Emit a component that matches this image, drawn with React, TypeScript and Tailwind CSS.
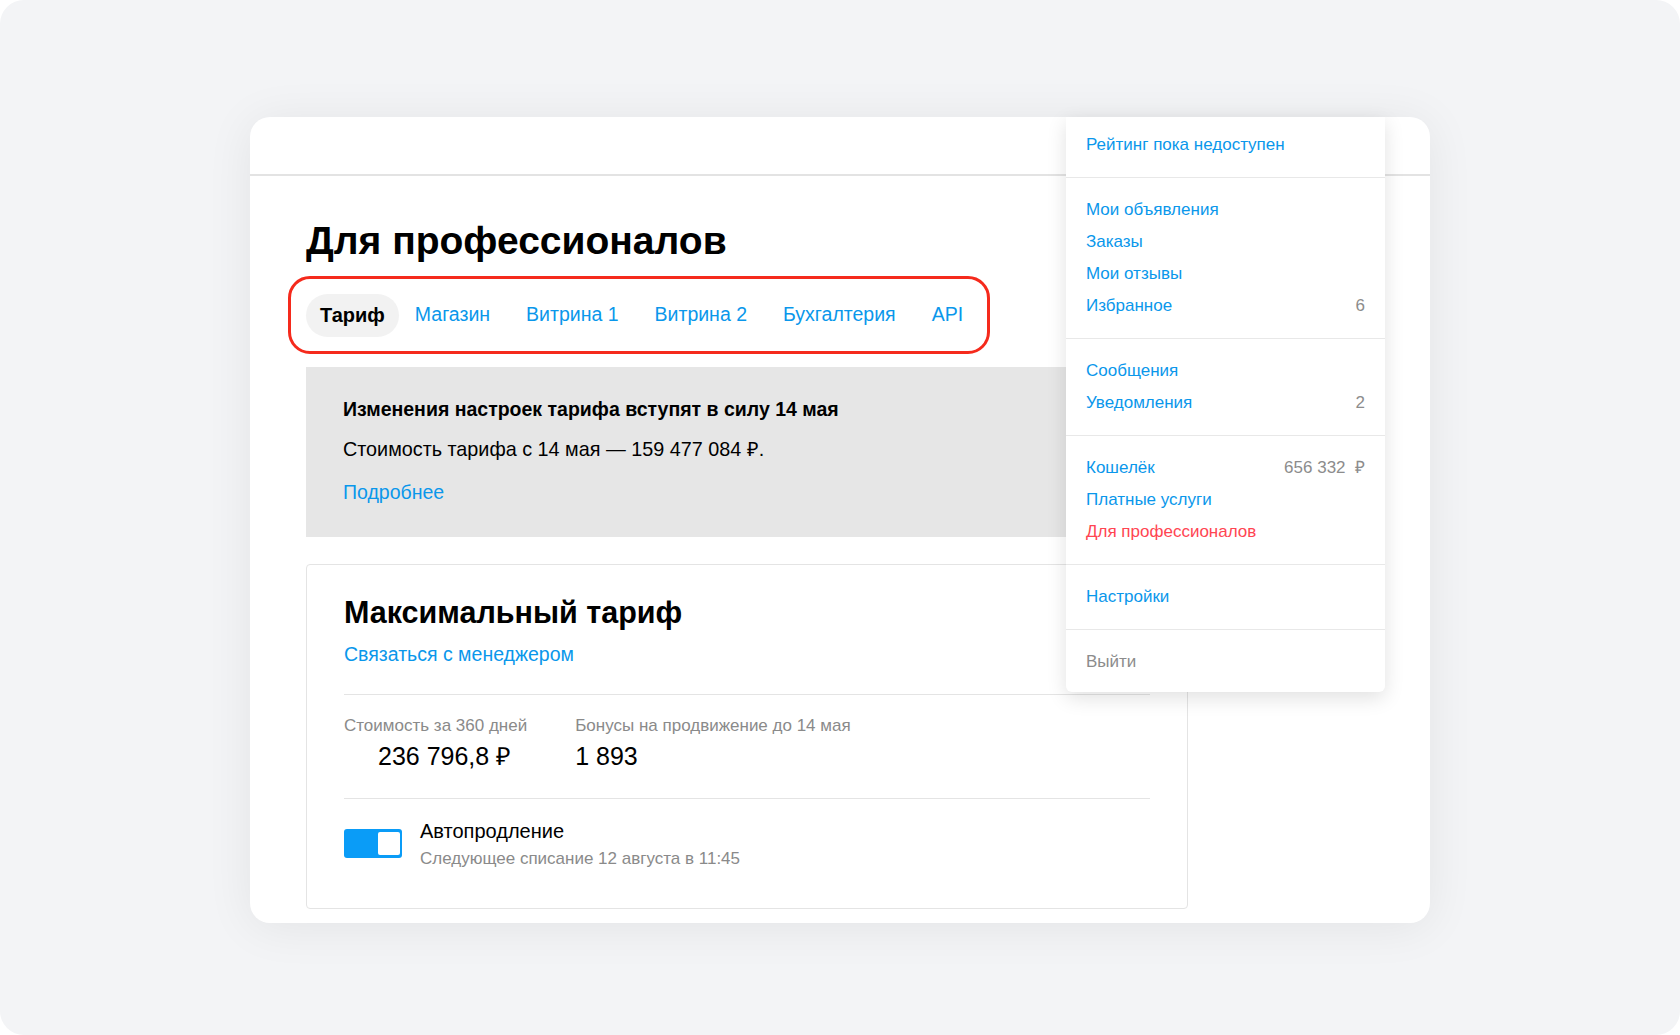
import React from 'react';

const tabs = ['Тариф', 'Магазин', 'Витрина 1', 'Витрина 2', 'Бухгалтерия', 'API'];

type MenuItem = { label: string; value?: string; tone?: 'link' | 'active' | 'muted' };

const menu: MenuItem[][] = [
  [{ label: 'Рейтинг пока недоступен' }],
  [
    { label: 'Мои объявления' },
    { label: 'Заказы' },
    { label: 'Мои отзывы' },
    { label: 'Избранное', value: '6' },
  ],
  [
    { label: 'Сообщения' },
    { label: 'Уведомления', value: '2' },
  ],
  [
    { label: 'Кошелёк', value: '656 332\u00a0\u00a0₽' },
    { label: 'Платные услуги' },
    { label: 'Для профессионалов', tone: 'active' },
  ],
  [{ label: 'Настройки' }],
  [{ label: 'Выйти', tone: 'muted' }],
];

const App: React.FC = () => {
  return (
    <div className="bg-white min-h-screen" style={{ fontFamily: '"Liberation Sans", Arial, sans-serif' }}>
      <div className="h-[1035px] rounded-3xl bg-[#f3f4f6] flex justify-center pt-[117px]">
        {/* Main card */}
        <div className="relative w-[1180px] h-[806px] rounded-[20px] bg-white shadow-[0_4px_48px_rgba(0,0,0,0.07)]">
          <div className="h-[59px] border-b-2 border-[#e3e3e3]" />

          <div className="pl-[56px]">
            <h1 className="mt-[45px] text-[39px] leading-[40px] font-bold text-black">Для профессионалов</h1>

            {/* Tabs (highlighted) */}
            <div className="mt-[15px] -ml-[18px] w-[702px] h-[78px] border-[3px] border-[#f52a1c] rounded-[22px] flex items-center pl-[15px]">
              {tabs.map((t, i) =>
                i === 0 ? (
                  <span key={t} className="h-[43px] px-[14px] rounded-full bg-[#f2f2f2] flex items-center text-[20px] font-bold text-black">
                    {t}
                  </span>
                ) : (
                  <span key={t} className={i === 1 ? 'px-4 text-[19.5px] text-[#0a97eb]' : 'ml-[4px] px-4 text-[19.5px] text-[#0a97eb]'}>
                    {t}
                  </span>
                )
              )}
            </div>

            {/* Notice */}
            <div className="mt-[13px] w-[882px] h-[170px] bg-[#e6e6e6] pl-[37px] pt-[30px]">
              <p className="text-[19.5px] leading-[24px] font-bold text-black">Изменения настроек тарифа вступят в силу 14 мая</p>
              <p className="mt-[16px] text-[19.8px] leading-[24px] text-black">Стоимость тарифа с 14 мая — 159 477 084 ₽.</p>
              <p className="mt-[19px] text-[19.5px] leading-[24px] text-[#0a97eb]">Подробнее</p>
            </div>

            {/* Tariff card */}
            <div className="mt-[27px] w-[882px] border border-[#e4e4e4] rounded-[4px] px-[37px] pt-[30px] pb-[39px]">
              <h2 className="text-[30.5px] leading-[34px] font-bold text-black">Максимальный тариф</h2>
              <p className="mt-[13px] text-[19.5px] leading-[24px] text-[#0a97eb]">Связаться с менеджером</p>
              <div className="mt-[28px] h-px bg-[#e4e4e4]" />

              <div className="mt-[21px] flex gap-[48px]">
                <div>
                  <p className="text-[17px] leading-[20px] text-[#8a8a8a]">Стоимость за 360 дней</p>
                  <p className="mt-[5px] pl-[34px] text-[25px] leading-[30px] text-black">236 796,8 ₽</p>
                </div>
                <div>
                  <p className="text-[17px] leading-[20px] text-[#8a8a8a]">Бонусы на продвижение до 14 мая</p>
                  <p className="mt-[5px] text-[25px] leading-[30px] text-black">1 893</p>
                </div>
              </div>

              <div className="mt-[27px] h-px bg-[#e4e4e4]" />

              <div className="mt-[21px] flex gap-[18px]">
                <div className="mt-[9px] w-[58px] h-[29px] rounded-[3px] bg-[#0a9cf7] flex items-center justify-end pr-[2px]">
                  <div className="w-[22px] h-[23px] rounded-[2px] bg-white" />
                </div>
                <div>
                  <p className="text-[20px] leading-[22px] text-black">Автопродление</p>
                  <p className="mt-[7px] text-[17px] leading-[20px] text-[#8a8a8a]">Следующее списание 12 августа в 11:45</p>
                </div>
              </div>
            </div>
          </div>

          {/* Profile dropdown */}
          <div className="absolute left-[816px] top-0 w-[319px] bg-white rounded-b-[6px] shadow-[0_6px_20px_rgba(0,0,0,0.12)]">
            {menu.map((section, si) => (
              <div
                key={si}
                className={
                  si === 0
                    ? 'pt-3 pb-4 px-5'
                    : si === menu.length - 1
                    ? 'pt-4 pb-[14px] px-5 border-t border-[#e8e8e8]'
                    : 'py-4 px-5 border-t border-[#e8e8e8]'
                }
              >
                {section.map((item) => (
                  <div key={item.label} className="h-8 flex items-center justify-between text-[17px]">
                    <span
                      className={
                        item.tone === 'active'
                          ? 'text-[#ff4552]'
                          : item.tone === 'muted'
                          ? 'text-[#8c8c8c]'
                          : 'text-[#0a97eb]'
                      }
                    >
                      {item.label}
                    </span>
                    {item.value && <span className="text-[#8c8c8c] whitespace-pre">{item.value}</span>}
                  </div>
                ))}
              </div>
            ))}
          </div>
        </div>
      </div>
    </div>
  );
};

export default App;
